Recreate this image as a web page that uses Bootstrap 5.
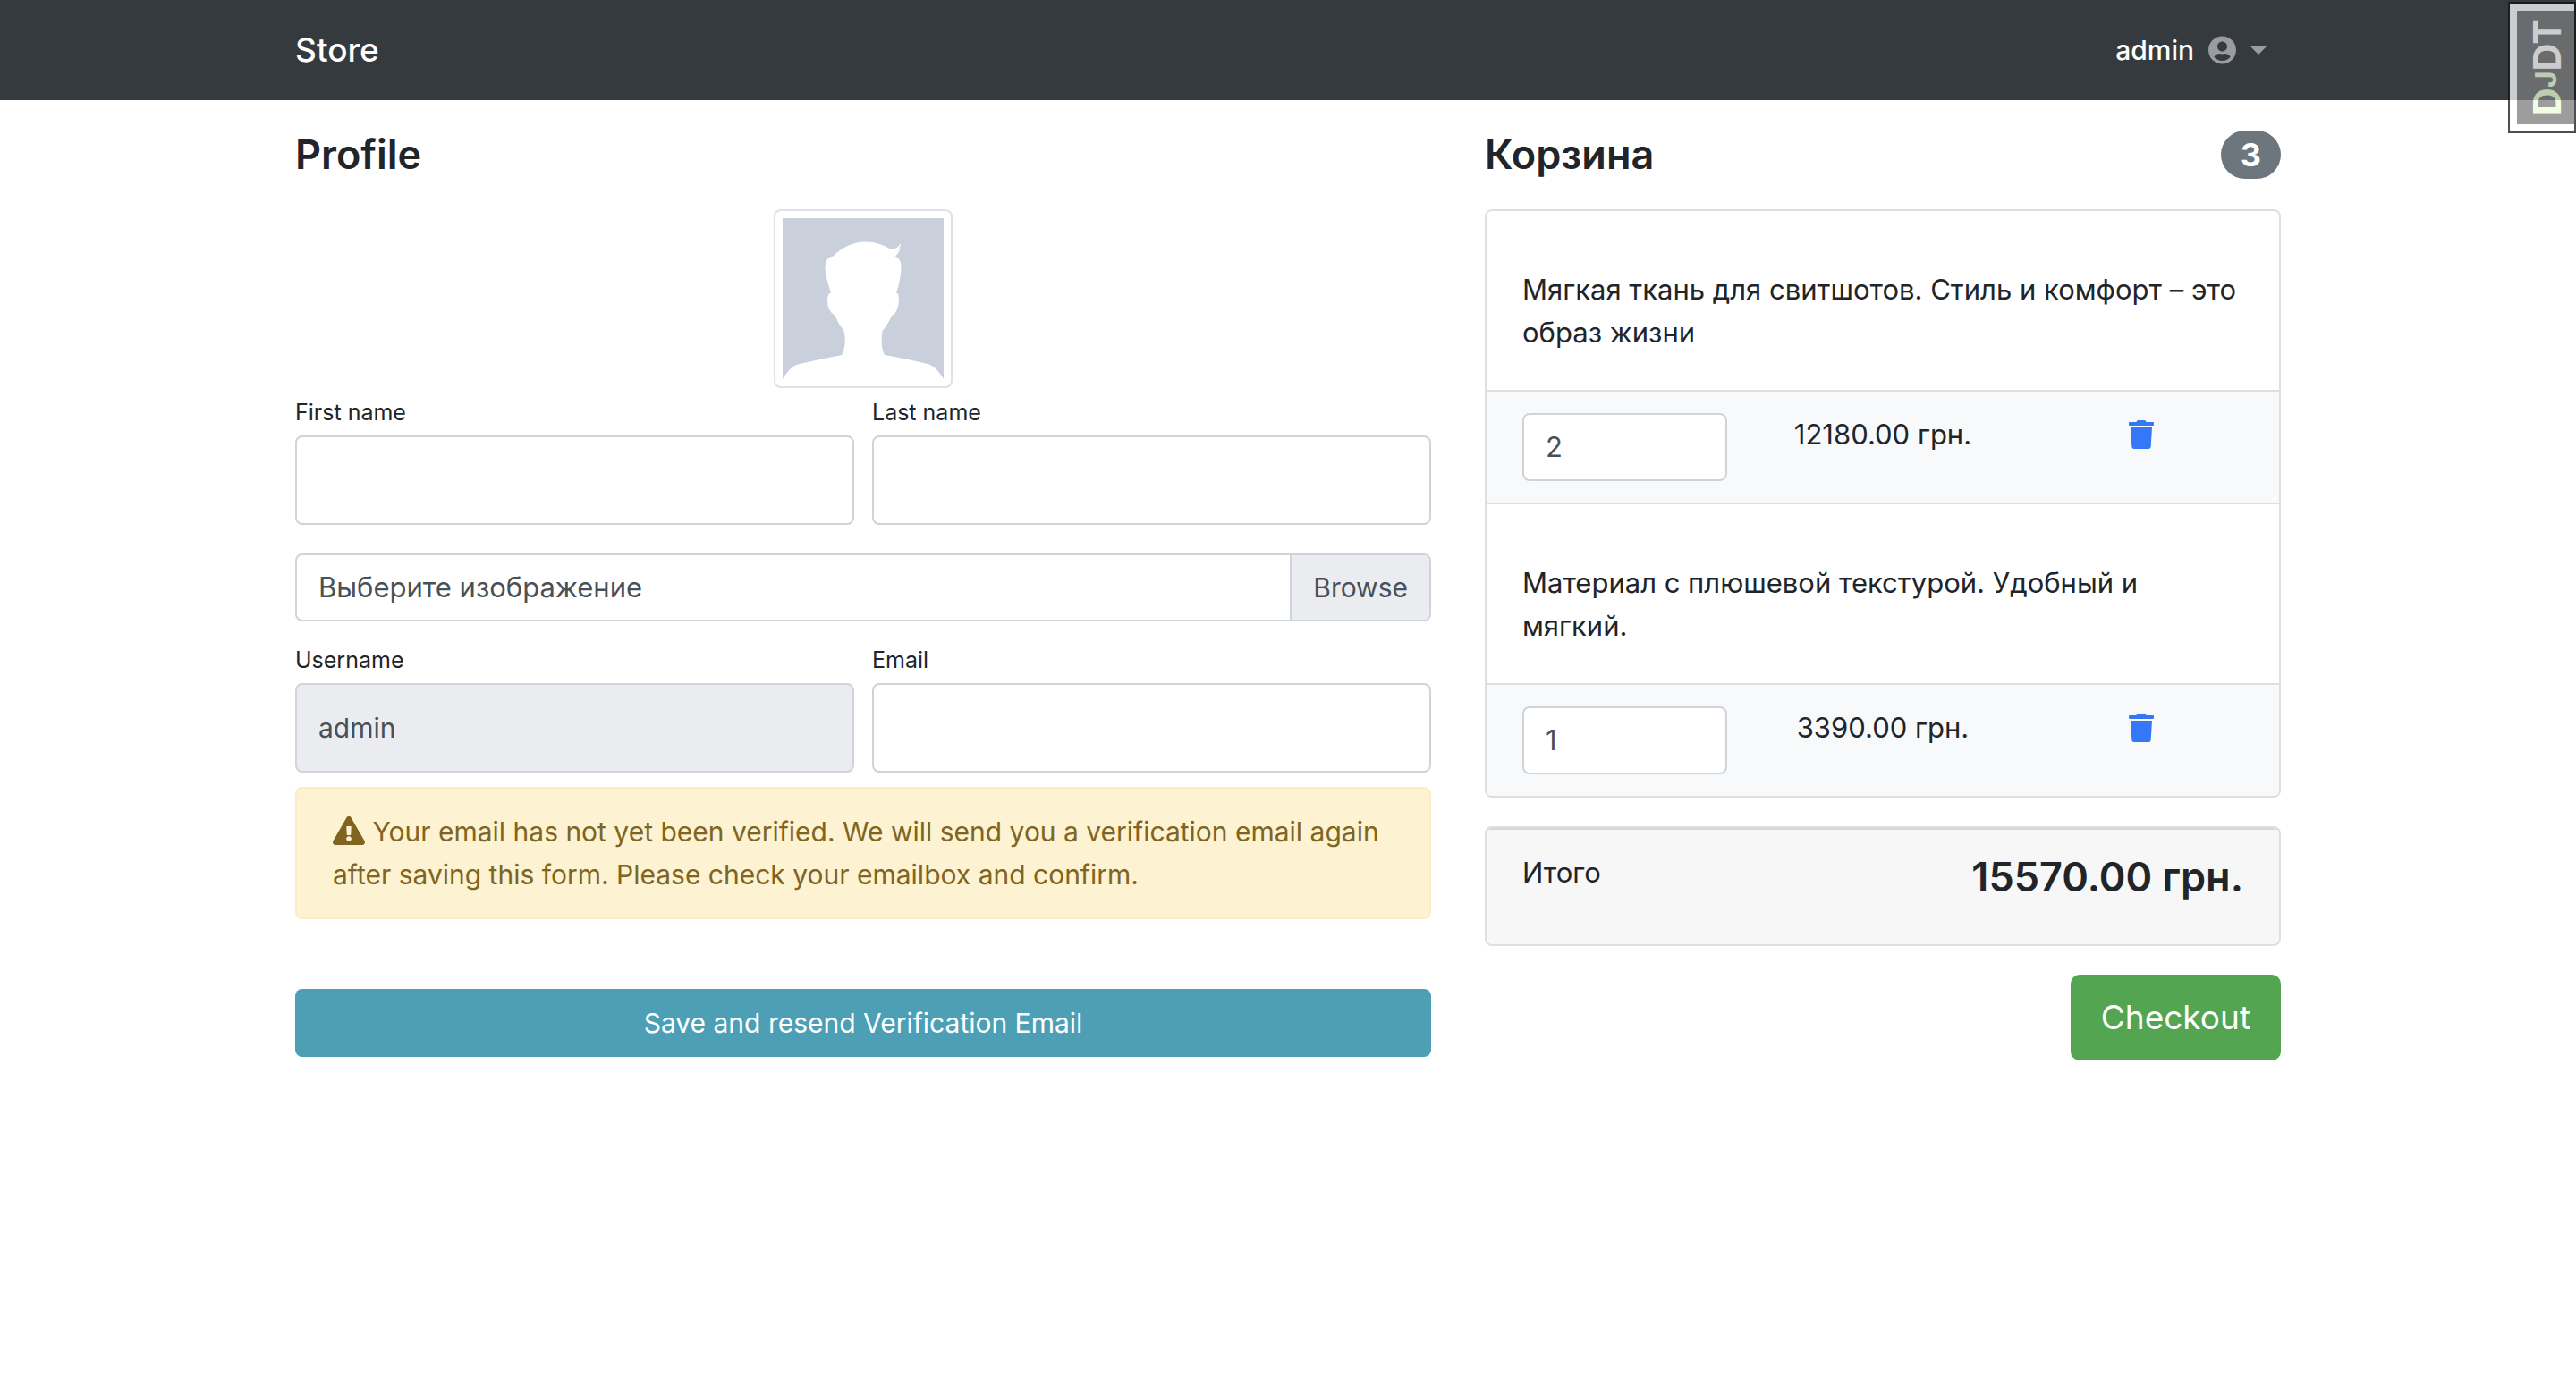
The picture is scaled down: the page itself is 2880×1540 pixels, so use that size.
<!DOCTYPE html>
<html lang="ru">
<head>
<meta charset="utf-8">
<meta name="viewport" content="width=device-width, initial-scale=1">
<title>Store</title>
<link href="https://cdn.jsdelivr.net/npm/bootstrap@5.3.0/dist/css/bootstrap.min.css" rel="stylesheet">
<style>
  html { font-size: 32px; }
  body {
    --bs-body-font-family: Inter, "Liberation Sans", sans-serif;
    font-size: 31px;
    line-height: 48px;
    color: #212529;
    background: #fff;
  }
  .shop-container { max-width: 2280px; padding-left: 30px; padding-right: 30px; }
  .shop-row { --bs-gutter-x: 60px; }
  .shop-nav { background: #353a3e; min-height: 112px; padding: 0; }
  .shop-brand { font-size: 37px; line-height: 60px; font-weight: 500; color: #fff; text-decoration: none; }
  .user-menu { font-size: 30px; line-height: 48px; font-weight: 500; color: #fff; padding: 0 16px; background: none; border: 0; gap: 16px; }
  .user-menu svg { fill: #9a9c9f; }
  .user-menu::after { color: #9a9c9f; margin: 0; border-top-width: 9px; border-left-width: 9px; border-right-width: 9px; }
  .section-title { font-size: 45px; line-height: 58px; font-weight: 600; margin-bottom: 32px; }
  .count-pill { background: #6d757d; color: #fff; font-size: 36px; line-height: 36px; font-weight: 700; padding: 9px 22px; margin-top: 2px; }
  .avatar { width: 200px; height: 200px; padding: 8px; border: 2px solid #dee2e6; border-radius: 8px; }
  .avatar svg { display: block; }
  .field-row { --bs-gutter-x: 20px; }
  .field-label { display: block; font-size: 25px; line-height: 38px; padding-top: 8px; margin-bottom: 7px; }
  .form-control, .picker { border: 2px solid #ced4d9; border-radius: 8px; font-size: 31px; line-height: 48px; color: #495057; }
  .form-control { padding: 12px 24px; }
  .form-control:disabled { background: #ebecf0; opacity: 1; }
  .tall { height: 100px; font-size: 30px; }
  .picker { overflow: hidden; cursor: pointer; }
  .picker span { padding: 12px 24px; }
  .picker .picker-btn { background: #ebecf0; border-left: 2px solid #ced4d9; font-size: 30px; }
  .notice { background: #fdf2d1; border: 2px solid #fceec0; border-radius: 8px; color: #7f651f; font-size: 30px; padding: 24px 40px; margin: 16px 0 78px; }
  .notice svg { fill: currentColor; vertical-align: -4px; }
  .btn-save { background: #4c9fb5; color: #fff; font-size: 30px; line-height: 48px; padding: 14px 24px; border: 0; border-radius: 8px; }
  .btn-checkout { background: #54a551; color: #fff; font-size: 37px; line-height: 60px; padding: 18px 34px; border: 0; border-radius: 10px; }
  .basket, .total-box { border: 2px solid #dfdfdf; border-radius: 8px; overflow: hidden; }
  .goods-name { padding: 64px 40px 40px; margin: 0; }
  .goods-foot { background: #f8f9fb; border-top: 2px solid #dfdfdf; padding: 24px 40px; }
  .goods + .goods { border-top: 2px solid #dfdfdf; }
  .trash-btn { background: none; border: 0; padding: 0; }
  .trash-btn svg { display: block; fill: #3478f7; margin: 8px auto 0; }
  .total-box { background: #f7f7f7; margin: 32px 0; }
  .total-line { border-top: 2px solid #d7d7d7; padding: 24px 40px 46px; }
  .total-sum { font-size: 45px; line-height: 58px; font-weight: 600; margin: 0; }
  .debug-tab {
    position: fixed; top: 2px; right: 0; z-index: 1050; opacity: .75;
    background: #7d7d7d; border: 10px solid #fff; border-right: 0;
    outline: 2px solid #141414; outline-offset: -2px;
    width: 76px; height: 147px; text-decoration: none;
  }
  .debug-tab span { writing-mode: vertical-rl; transform: rotate(180deg); font-weight: 700; font-size: 43px; line-height: 44px; color: #fff; white-space: nowrap; }
  .debug-tab .dj { color: #ebffd8; }
  .debug-tab .dj-small { font-size: 32px; }
</style>
</head>
<body>
<nav class="navbar shop-nav">
  <div class="container-fluid shop-container">
    <a class="shop-brand" href="#">Store</a>
    <button class="user-menu dropdown-toggle d-flex align-items-center" type="button" data-bs-toggle="dropdown">admin
      <svg width="31" height="32" viewBox="0 0 496 512" aria-hidden="true"><path d="M248 8C111 8 0 119 0 256s111 248 248 248 248-111 248-248S385 8 248 8zm0 96c48.600 0 88 39.400 88 88s-39.400 88-88 88-88-39.400-88-88 39.400-88 88-88zm0 344c-58.700 0-111.300-26.600-146.500-68.200 18.800-35.400 55.600-59.800 98.500-59.800 2.400 0 4.800.4 7.100 1.100 13 4.200 26.600 6.900 40.900 6.900 14.300 0 28-2.700 40.900-6.900 2.300-.7 4.700-1.100 7.100-1.100 42.900 0 79.700 24.400 98.500 59.800C359.300 421.400 306.700 448 248 448z"/></svg>
    </button>
  </div>
</nav>

<main class="container-fluid shop-container pt-3">
  <div class="row shop-row">
    <section class="col-7">
      <h1 class="section-title">Profile</h1>
      <form>
        <div class="avatar mx-auto">
          <svg viewBox="0 0 180 180" width="180" height="180" role="img" aria-label="Avatar">
            <rect width="180" height="180" fill="#cacfdc"/>
            <path fill="#fff" d="M0 180Q7 168 15 164Q22 162 66 153Q72 142 68.500 126Q62 118 58.500 109Q50 104 50 92Q50 84 54 83.500Q48 66 47.500 55Q48 43 56.500 42.500Q72 27 91.500 26.500Q107 26 121.500 35Q129 34 132 28Q132 34 126 38Q130 36 131.500 33Q131 38 126 42.500Q132 45 132.500 54Q132 70 127 83.500Q130 83 130 92Q129 106 122 109Q117 120 111.500 126Q109 144 114 153Q158 161 165 164Q173 168 180 180Z"/>
          </svg>
        </div>
        <div class="row field-row">
          <div class="col">
            <label class="field-label" for="first-name">First name</label>
            <input class="form-control tall" id="first-name" type="text">
          </div>
          <div class="col">
            <label class="field-label" for="last-name">Last name</label>
            <input class="form-control tall" id="last-name" type="text">
          </div>
        </div>
        <input class="visually-hidden" id="photo" type="file">
        <label class="picker d-flex mt-3 mb-2" for="photo">
          <span class="flex-grow-1">Выберите изображение</span>
          <span class="picker-btn">Browse</span>
        </label>
        <div class="row field-row">
          <div class="col">
            <label class="field-label" for="user-name">Username</label>
            <input class="form-control tall" id="user-name" type="text" value="admin" disabled>
          </div>
          <div class="col">
            <label class="field-label" for="email">Email</label>
            <input class="form-control tall" id="email" type="email">
          </div>
        </div>
        <div class="notice" role="alert">
          <svg width="36" height="32" viewBox="0 0 576 512" aria-hidden="true"><path d="M569.517 440.013C587.975 472.007 564.806 512 527.940 512H48.054c-36.937 0-59.999-40.055-41.577-71.987L246.423 23.985c18.467-32.009 64.720-31.951 83.154 0l239.940 416.028zM288 354c-25.405 0-46 20.595-46 46s20.595 46 46 46 46-20.595 46-46-20.595-46-46-46zm-43.673-165.346l7.418 136c.347 6.364 5.609 11.346 11.982 11.346h48.546c6.373 0 11.635-4.982 11.982-11.346l7.418-136c.375-6.874-5.098-12.654-11.982-12.654h-63.383c-6.884 0-12.356 5.780-11.981 12.654z"/></svg>
          Your email has not yet been verified. We will send you a verification email again after saving this form. Please check your emailbox and confirm.
        </div>
        <button class="btn btn-save w-100" type="submit">Save and resend Verification Email</button>
      </form>
    </section>

    <section class="col-5">
      <div class="d-flex justify-content-between align-items-start">
        <h2 class="section-title">Корзина</h2>
        <span class="count-pill rounded-pill">3</span>
      </div>
      <div class="basket">
        <div class="goods">
          <p class="goods-name">Мягкая ткань для свитшотов. Стиль и комфорт – это образ жизни</p>
          <div class="goods-foot">
            <div class="row shop-row">
              <div class="col-4"><input class="form-control" type="number" value="2" aria-label="Количество"></div>
              <div class="col-4 text-center text-nowrap">12180.00 грн.</div>
              <div class="col-4 text-center"><button class="trash-btn" type="button" aria-label="Удалить"><svg width="28" height="32" viewBox="0 0 448 512"><path d="M432 32H312l-9.400-18.700A24 24 0 0 0 281.100 0H166.800a23.720 23.720 0 0 0-21.400 13.300L136 32H16A16 16 0 0 0 0 48v32a16 16 0 0 0 16 16h416a16 16 0 0 0 16-16V48a16 16 0 0 0-16-16zM53.200 467a48 48 0 0 0 47.900 45h245.800a48 48 0 0 0 47.900-45L416 128H32z"/></svg></button></div>
            </div>
          </div>
        </div>
        <div class="goods">
          <p class="goods-name">Материал с плюшевой текстурой. Удобный и мягкий.</p>
          <div class="goods-foot">
            <div class="row shop-row">
              <div class="col-4"><input class="form-control" type="number" value="1" aria-label="Количество"></div>
              <div class="col-4 text-center text-nowrap">3390.00 грн.</div>
              <div class="col-4 text-center"><button class="trash-btn" type="button" aria-label="Удалить"><svg width="28" height="32" viewBox="0 0 448 512"><path d="M432 32H312l-9.400-18.700A24 24 0 0 0 281.100 0H166.800a23.720 23.720 0 0 0-21.400 13.300L136 32H16A16 16 0 0 0 0 48v32a16 16 0 0 0 16 16h416a16 16 0 0 0 16-16V48a16 16 0 0 0-16-16zM53.200 467a48 48 0 0 0 47.900 45h245.800a48 48 0 0 0 47.900-45L416 128H32z"/></svg></button></div>
            </div>
          </div>
        </div>
      </div>
      <div class="total-box">
        <div class="total-line d-flex justify-content-between align-items-start">
          <span>Итого</span>
          <strong class="total-sum">15570.00 грн.</strong>
        </div>
      </div>
      <div class="text-end"><button class="btn btn-checkout" type="button">Checkout</button></div>
    </section>
  </div>
</main>

<a class="debug-tab d-flex align-items-center justify-content-center" href="#" title="Show toolbar"><span><span class="dj">D<span class="dj dj-small">J</span></span>DT</span></a>
<script src="https://cdn.jsdelivr.net/npm/bootstrap@5.3.0/dist/js/bootstrap.bundle.min.js"></script>
</body>
</html>
